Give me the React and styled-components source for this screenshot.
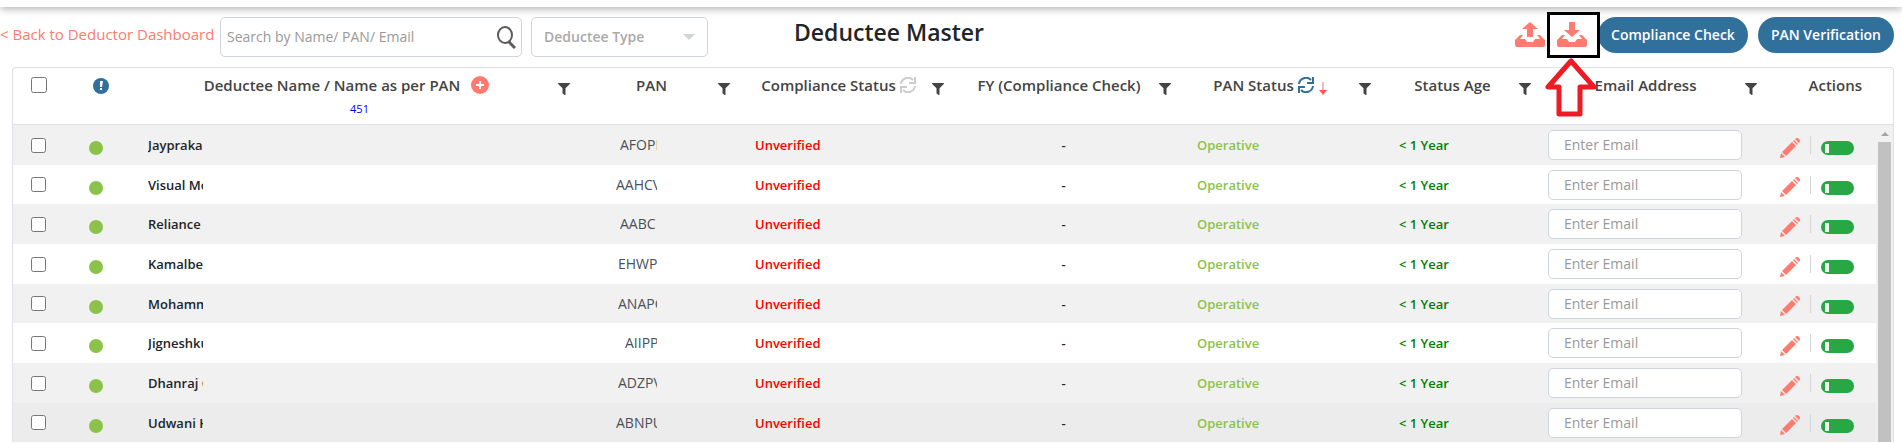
import React from 'react';
import styled, { createGlobalStyle } from 'styled-components';
import { FaFilter } from 'react-icons/fa';

const GlobalStyle = createGlobalStyle`
  * { box-sizing: border-box; }
  body {
    margin: 0;
    background: #fff;
    overflow: hidden;
    color: #212529;
    font-family: "Segoe UI", "Open Sans", "Noto Sans", sans-serif;
    font-size: 13px;
  }
  button, input, select { font-family: inherit; }
`;

const TopBar = styled.header`
  height: 7px;
  background: #fff;
  box-shadow: 0 1px 8px rgba(0, 0, 0, 0.4);
`;

const Toolbar = styled.div`
  display: flex;
  align-items: flex-start;
  height: 60px;
  padding: 10px 8px 0 0;
`;

const Side = styled.div`
  display: flex;
  flex: ${({ $end }) => ($end ? '1 1 0' : '0 0 auto')};
  align-items: flex-start;
  justify-content: ${({ $end }) => ($end ? 'flex-end' : 'flex-start')};
`;

const BackLink = styled.a`
  width: 220px;
  color: #ff7b6f;
  font-size: 15px;
  line-height: 34px;
  text-decoration: none;
  white-space: nowrap;
`;

const SearchBox = styled.div`
  display: flex;
  align-items: center;
  width: 302px;
  height: 40px;
  margin-right: 9px;
  padding-right: 5px;
  border: 1px solid #ced4da;
  border-radius: 5px;
`;

const SearchInput = styled.input`
  flex: 1;
  min-width: 0;
  height: 36px;
  padding: 0 6px 2px;
  border: 0;
  outline: 0;
  background: transparent;
  font-size: 14px;
  &::placeholder { color: #999; }
`;

const IconButton = styled.button`
  display: flex;
  padding: 0;
  border: 0;
  background: transparent;
  color: ${({ $color }) => $color || 'inherit'};
  cursor: pointer;
`;

const SelectWrap = styled.div`
  display: flex;
  align-items: center;
  position: relative;
  width: 177px;
  height: 40px;
  svg {
    position: absolute;
    right: 13px;
    pointer-events: none;
  }
`;

const Select = styled.select`
  appearance: none;
  width: 100%;
  height: 100%;
  padding: 0 12px 2px;
  border: 1px solid #ced4da;
  border-radius: 5px;
  background: #fff;
  color: #aaa;
  font-size: 14px;
  font-weight: 600;
`;

const Title = styled.h1`
  margin: 0 0 0 86px;
  font-size: 23px;
  font-weight: 600;
  line-height: 30px;
  white-space: nowrap;
`;

const TrayGroup = styled.div`
  display: flex;
  gap: 12px;
  margin-right: 11px;
  padding-top: 5px;
`;

const Marked = styled.div`
  position: relative;
`;

const MarkBox = styled.span`
  position: absolute;
  top: -10px;
  left: -10px;
  z-index: 2;
  width: 53px;
  height: 46px;
  border: 3px solid #000;
  pointer-events: none;
`;

const MarkArrow = styled.svg`
  position: absolute;
  top: 35px;
  left: -12px;
  z-index: 2;
  pointer-events: none;
`;

const PillButton = styled.button`
  height: 36px;
  padding: 0 13px 2px;
  border: 0;
  border-radius: 18px;
  background: #32709c;
  color: #fff;
  font-size: 14px;
  font-weight: 600;
  white-space: nowrap;
  cursor: pointer;
  & + & { margin-left: 10px; }
`;

const Card = styled.main`
  position: relative;
  margin: 0 8px 0 12px;
  border: 1px solid #dee2e6;
  border-bottom: 0;
  border-radius: 4px 4px 0 0;
`;

const Table = styled.table`
  display: block;
  thead, tbody { display: block; }
  tbody { margin-right: 17px; }
`;

const columns = [60, 66, 434, 160, 214, 227, 200, 160, 226, 116]
  .map((w) => `minmax(0, ${w}fr)`)
  .join(' ');

const HeadRow = styled.tr`
  display: grid;
  grid-template-columns: ${columns};
  height: 57px;
  padding-right: 17px;
  border-bottom: 1px solid #dee2e6;
`;

const HeadCell = styled.th`
  display: grid;
  grid-template-columns: ${({ $plain }) => ($plain ? '1fr' : '15px 1fr 15px')};
  grid-template-rows: 34px 14px;
  align-items: center;
  padding: 0 ${({ $plain }) => ($plain ? 0 : 3)}px 0 0;
  color: #444;
  font-size: 15px;
  font-weight: 600;
  white-space: nowrap;
`;

const HeadLabel = styled.span`
  display: flex;
  grid-column: 2;
  align-items: center;
  justify-content: center;
  gap: ${({ $gap }) => $gap || 4}px;
  padding-right: ${({ $shift }) => $shift || 0}px;
`;

const ActionsLabel = styled.span`
  margin-right: -14px;
  padding-right: 28px;
  text-align: right;
`;

const FilterButton = styled(IconButton)`
  justify-self: end;
  padding-top: 7px;
`;

const Count = styled.span`
  grid-column: 2;
  padding-left: 10px;
  color: #00f;
  font-size: 11px;
  font-weight: 500;
  line-height: 14px;
  text-align: center;
`;

const Row = styled.tr`
  display: grid;
  grid-template-columns: ${columns};
  height: 40px;
  background: ${({ $active }) => ($active ? '#ececec' : '#fff')};
  &:nth-child(odd) { background: #f1f1f1; }
  &:nth-child(3n + 2) { height: 39px; }
`;

const Cell = styled.td`
  display: flex;
  align-items: center;
  justify-content: ${({ $align }) => $align || 'flex-start'};
  padding: 0 0 0 ${({ $pad }) => $pad || 0}px;
  color: ${({ $color }) => $color || '#212529'};
  font-weight: 600;
  line-height: 20px;
  white-space: nowrap;
`;

const PanCell = styled(Cell)`
  color: #495057;
  font-size: 14px;
  font-weight: 500;
`;

const Check = styled.input`
  width: ${({ $size }) => $size}px;
  height: ${({ $size }) => $size}px;
  margin: 0 0 0 18px;
`;

const InfoBadge = styled.svg`
  display: block;
  margin: 2px 0 0 20px;
`;

const Dot = styled.span`
  width: 14px;
  height: 14px;
  margin-top: 6px;
  border-radius: 50%;
  background: #8bc34a;
`;

const Clip = styled.span`
  width: ${({ $width }) => $width}px;
  overflow: hidden;
`;

const EmailInput = styled.input`
  width: 194px;
  height: 30px;
  padding: 0 15px 1px;
  border: 1px solid #ced4da;
  border-radius: 5px;
  background: #fff;
  font-size: 14px;
  &::placeholder { color: #999; }
`;

const Divider = styled.span`
  width: 1px;
  height: 18px;
  margin: 0 10px;
  background: #d5d5d5;
`;

const Toggle = styled.input`
  appearance: none;
  width: 33px;
  height: 14px;
  margin: 6px 0 0;
  border-radius: 7px;
  background: #28a745;
  &::before {
    content: '';
    display: block;
    width: 4px;
    height: 9px;
    margin: 3px 0 0 4px;
    background: #f1f1f1;
  }
`;

const Pencil = styled.svg`
  display: block;
  margin-top: 5px;
`;

const ScrollTrack = styled.div`
  position: absolute;
  top: 57px;
  right: 0;
  bottom: 0;
  width: 17px;
  padding: 0 2px;
  background: #f1f1f1;
`;

const ScrollArrow = styled.svg`
  display: block;
  margin: 7px auto 6px;
`;

const ScrollThumb = styled.div`
  height: 100%;
  background: #c1c1c1;
`;

const ScrollClip = styled.div`
  height: 100%;
  overflow: hidden;
`;

const rows = [
  { name: 'Jaypraka', pan: 'AFOPI', width: 37 },
  { name: 'Visual Mo', pan: 'AAHCV', width: 41 },
  { name: 'Reliance', pan: 'AABC', width: 37 },
  { name: 'Kamalbe', pan: 'EHWP', width: 39 },
  { name: 'Mohamm', pan: 'ANAPC', width: 39 },
  { name: 'Jigneshku', pan: 'AIIPP', width: 32 },
  { name: 'Dhanraj C', pan: 'ADZPV', width: 39 },
  { name: 'Udwani H', pan: 'ABNPU', width: 41, active: true },
];

function Filter({ label }) {
  return (
    <FilterButton type="button" aria-label={`Filter ${label}`}>
      <FaFilter size={12} />
    </FilterButton>
  );
}

function TrayIcon({ down }) {
  return (
    <svg width="30" height="25" viewBox="0 0 30 25" fill="currentColor">
      <path d={down ? 'M12 0h6v8h5l-8 7-8-7h5z' : 'M15 0l8 7h-5v8h-6V7H7z'} />
      <path d="M5 13h3l-3 4h5l2 3h6l2-3h5l-3-4h3l5 5v5q0 2-2 2H2q-2 0-2-2v-5z" />
    </svg>
  );
}

function Refresh({ color }) {
  return (
    <svg width="16" height="16" viewBox="0 0 16 16" fill="none" stroke={color} strokeWidth="2">
      <path d="M1 7a7 7 0 0 1 12-4M15 9a7 7 0 0 1-12 4" />
      <path d="M15 0v6H9M1 16v-6h6" />
    </svg>
  );
}

function App() {
  return (
    <>
      <GlobalStyle />
      <TopBar />
      <Toolbar>
        <Side>
          <BackLink href="#dashboard">&lt; Back to Deductor Dashboard</BackLink>
          <SearchBox>
            <SearchInput aria-label="Search deductees" placeholder="Search by Name/ PAN/ Email" />
            <IconButton type="button" aria-label="Search" $color="#5c5c5c">
              <svg width="20" height="23" viewBox="0 0 20 23" fill="none" stroke="currentColor" strokeWidth="2">
                <ellipse cx="9" cy="9" rx="7" ry="8" />
                <path d="M13 16l6 6" strokeWidth="3" />
              </svg>
            </IconButton>
          </SearchBox>
          <SelectWrap>
            <Select aria-label="Deductee Type" defaultValue="">
              <option value="">Deductee Type</option>
            </Select>
            <svg width="12" height="6" viewBox="0 0 12 6"><path d="M0 0h12L6 6z" fill="#ced4da" /></svg>
          </SelectWrap>
        </Side>
        <Title>Deductee Master</Title>
        <Side $end>
          <TrayGroup>
            <IconButton type="button" aria-label="Upload" $color="#ff7b6f"><TrayIcon /></IconButton>
            <Marked>
              <IconButton type="button" aria-label="Download" $color="#ff7b6f"><TrayIcon down /></IconButton>
              <MarkBox />
              <MarkArrow width="52" height="61" viewBox="0 0 52 61">
                <path d="M26 4L3 30h11v27h21V30h14z" fill="#fff" stroke="#ed1c24" strokeWidth="5" strokeLinejoin="round" />
              </MarkArrow>
            </Marked>
          </TrayGroup>
          <PillButton type="button">Compliance Check</PillButton>
          <PillButton type="button">PAN Verification</PillButton>
        </Side>
      </Toolbar>
      <Card>
        <Table>
          <thead>
            <HeadRow>
              <HeadCell $plain><Check type="checkbox" aria-label="Select all" $size={16} /></HeadCell>
              <HeadCell $plain>
                <InfoBadge width="16" height="16" viewBox="0 0 16 16">
                  <circle cx="8" cy="8" r="8" fill="#32709c" />
                  <path d="M7 3h3l-1 6H7zM7 10h2v2H7z" fill="#fff" />
                </InfoBadge>
              </HeadCell>
              <HeadCell>
                <HeadLabel $gap={11} $shift={16}>
                  Deductee Name / Name as per PAN
                  <IconButton type="button" aria-label="Add deductee">
                    <svg width="18" height="18" viewBox="0 0 18 18">
                      <circle cx="9" cy="9" r="9" fill="#ff7b6f" />
                      <path d="M9 5v8M5 9h8" stroke="#fff" strokeWidth="2" />
                    </svg>
                  </IconButton>
                </HeadLabel>
                <Filter label="name" />
                <Count>451</Count>
              </HeadCell>
              <HeadCell><HeadLabel>PAN</HeadLabel><Filter label="PAN" /></HeadCell>
              <HeadCell>
                <HeadLabel>Compliance Status<Refresh color="#ccc" /></HeadLabel>
                <Filter label="compliance status" />
              </HeadCell>
              <HeadCell><HeadLabel>FY (Compliance Check)</HeadLabel><Filter label="FY" /></HeadCell>
              <HeadCell>
                <HeadLabel $shift={4}>
                  PAN Status
                  <Refresh color="#32709c" />
                  <svg width="10" height="22" viewBox="0 0 10 22">
                    <path d="M5 8v9" stroke="#ff6b61" strokeWidth="1" />
                    <path d="M1 16h8l-4 5z" fill="#ff5b52" />
                  </svg>
                </HeadLabel>
                <Filter label="PAN status" />
              </HeadCell>
              <HeadCell><HeadLabel>Status Age</HeadLabel><Filter label="status age" /></HeadCell>
              <HeadCell><HeadLabel>Email Address</HeadLabel><Filter label="email" /></HeadCell>
              <HeadCell $plain><ActionsLabel>Actions</ActionsLabel></HeadCell>
            </HeadRow>
          </thead>
          <tbody>
            {rows.map((row) => (
              <Row key={row.name} $active={row.active}>
                <Cell><Check type="checkbox" aria-label={`Select ${row.name}`} $size={15} /></Cell>
                <Cell $pad={16}><Dot /></Cell>
                <Cell $pad={9}><Clip $width={55}>{row.name}</Clip></Cell>
                <PanCell $pad={84 - row.width}><Clip $width={row.width}>{row.pan}</Clip></PanCell>
                <Cell $pad={22} $color="#f00">Unverified</Cell>
                <Cell $align="center" $pad={6}>-</Cell>
                <Cell $pad={23} $color="#8bc34a">Operative</Cell>
                <Cell $pad={25} $color="#008000">&lt; 1 Year</Cell>
                <Cell $pad={14}><EmailInput type="email" aria-label={`Email for ${row.name}`} placeholder="Enter Email" /></Cell>
                <Cell $pad={20}>
                  <IconButton type="button" aria-label={`Edit ${row.name}`} $color="#ff7b6f">
                    <Pencil width="20" height="20" viewBox="0 0 20 20" fill="currentColor">
                      <path d="M0 20l1-5 4 4zM2 14L12 4l4 4L6 18zM13 3l1-1 4 4-1 1zM15 1q2-2 4 0t0 4z" />
                    </Pencil>
                  </IconButton>
                  <Divider />
                  <Toggle type="checkbox" role="switch" aria-label={`Active ${row.name}`} defaultChecked />
                </Cell>
              </Row>
            ))}
          </tbody>
        </Table>
        <ScrollTrack>
          <ScrollClip>
            <ScrollArrow width="8" height="4" viewBox="0 0 8 4"><path d="M0 4l4-4 4 4z" fill="#a3a3a3" /></ScrollArrow>
            <ScrollThumb />
          </ScrollClip>
        </ScrollTrack>
      </Card>
    </>
  );
}

export default App;
